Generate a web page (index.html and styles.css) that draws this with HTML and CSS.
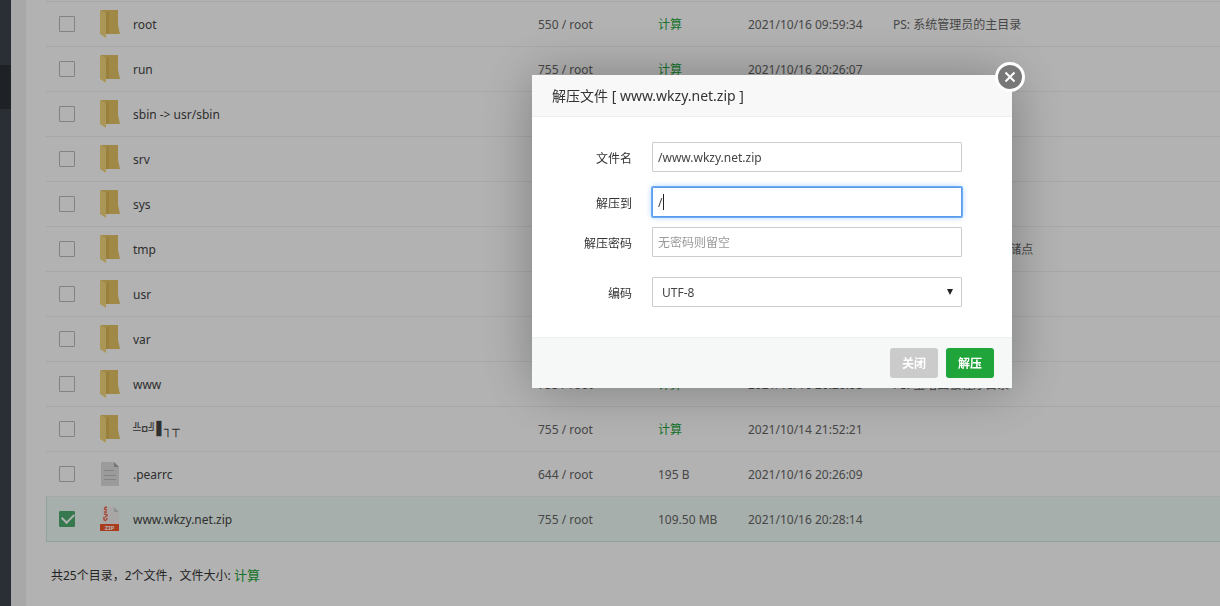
FILE: index.html
```
<!DOCTYPE html>
<html lang="zh-CN">
<head>
    <meta charset="UTF-8">
    <meta name="viewport" content="width=device-width, initial-scale=1.0">
    <title>文件管理</title>
    <link rel="stylesheet" href="styles.css">
</head>
<body>
    <!-- shared icons -->
    <svg class="sprite" aria-hidden="true">
        <symbol id="icon-folder" viewBox="0 0 20 30">
            <path fill="#e6c566" d="M1 1h17v15l2 9H6z"/>
            <path fill="#dcb958" d="M6 4l3-2v23H6z"/>
            <path fill="#f4d97e" d="M0 1l6 3v25l-6-4z"/>
        </symbol>
        <symbol id="icon-file" viewBox="0 0 20 26">
            <path fill="#dedede" d="M1 1h13l5 5v19H1z"/>
            <path fill="#a9a9a9" d="M14 1l5 5h-5z"/>
            <path stroke="#bdbdbd" stroke-width="1" d="M4 9.500h10M4 14.500h12M4 18.500h12"/>
        </symbol>
    </svg>

    <div class="page">
        <div class="sidebar"><div class="sidebar-active"></div></div>
        <div class="content">
            <table class="files">
                <colgroup>
                    <col class="col-check">
                    <col class="col-name">
                    <col class="col-perm">
                    <col class="col-size">
                    <col class="col-date">
                    <col>
                </colgroup>
                <tbody>
                    <tr>
                        <td><input type="checkbox" aria-label="root"></td>
                        <td><div class="name"><svg class="folder"><use href="#icon-folder"/></svg><span>root</span></div></td>
                        <td>550 / root</td>
                        <td><a href="#">计算</a></td>
                        <td>2021/10/16 09:59:34</td>
                        <td>PS: 系统管理员的主目录</td>
                    </tr>
                    <tr>
                        <td><input type="checkbox" aria-label="run"></td>
                        <td><div class="name"><svg class="folder"><use href="#icon-folder"/></svg><span>run</span></div></td>
                        <td>755 / root</td>
                        <td><a href="#">计算</a></td>
                        <td>2021/10/16 20:26:07</td>
                        <td></td>
                    </tr>
                    <tr>
                        <td><input type="checkbox" aria-label="sbin"></td>
                        <td><div class="name"><svg class="folder"><use href="#icon-folder"/></svg><span>sbin -&gt; usr/sbin</span></div></td>
                        <td></td>
                        <td></td>
                        <td></td>
                        <td></td>
                    </tr>
                    <tr>
                        <td><input type="checkbox" aria-label="srv"></td>
                        <td><div class="name"><svg class="folder"><use href="#icon-folder"/></svg><span>srv</span></div></td>
                        <td></td>
                        <td></td>
                        <td></td>
                        <td></td>
                    </tr>
                    <tr>
                        <td><input type="checkbox" aria-label="sys"></td>
                        <td><div class="name"><svg class="folder"><use href="#icon-folder"/></svg><span>sys</span></div></td>
                        <td></td>
                        <td></td>
                        <td></td>
                        <td></td>
                    </tr>
                    <tr>
                        <td><input type="checkbox" aria-label="tmp"></td>
                        <td><div class="name"><svg class="folder"><use href="#icon-folder"/></svg><span>tmp</span></div></td>
                        <td></td>
                        <td></td>
                        <td></td>
                        <td>PS: 公用的临时文件存储点</td>
                    </tr>
                    <tr>
                        <td><input type="checkbox" aria-label="usr"></td>
                        <td><div class="name"><svg class="folder"><use href="#icon-folder"/></svg><span>usr</span></div></td>
                        <td></td>
                        <td></td>
                        <td></td>
                        <td></td>
                    </tr>
                    <tr>
                        <td><input type="checkbox" aria-label="var"></td>
                        <td><div class="name"><svg class="folder"><use href="#icon-folder"/></svg><span>var</span></div></td>
                        <td></td>
                        <td></td>
                        <td></td>
                        <td></td>
                    </tr>
                    <tr>
                        <td><input type="checkbox" aria-label="www"></td>
                        <td><div class="name"><svg class="folder"><use href="#icon-folder"/></svg><span>www</span></div></td>
                        <td>755 / root</td>
                        <td><a href="#">计算</a></td>
                        <td>2021/10/16 20:26:08</td>
                        <td>PS: 宝塔面板程序目录</td>
                    </tr>
                    <tr>
                        <td><input type="checkbox" aria-label="╩¤╝▋┐┬"></td>
                        <td><div class="name"><svg class="folder"><use href="#icon-folder"/></svg><span class="garbled">╩¤╝▋┐┬</span></div></td>
                        <td>755 / root</td>
                        <td><a href="#">计算</a></td>
                        <td>2021/10/14 21:52:21</td>
                        <td></td>
                    </tr>
                    <tr>
                        <td><input type="checkbox" aria-label=".pearrc"></td>
                        <td><div class="name"><svg class="file"><use href="#icon-file"/></svg><span>.pearrc</span></div></td>
                        <td>644 / root</td>
                        <td>195 B</td>
                        <td>2021/10/16 20:26:09</td>
                        <td></td>
                    </tr>
                    <tr class="selected">
                        <td><input type="checkbox" aria-label="www.wkzy.net.zip" checked></td>
                        <td>
                            <div class="name">
                                <svg class="file" viewBox="0 0 20 26">
                                    <path fill="#f1efed" d="M2 1h12l5 5v12H2z"/>
                                    <path fill="#ccd2d0" d="M14 1l5 5h-5z"/>
                                    <path fill="none" stroke="#ee6a50" stroke-width="1.500" d="M7 1c-3 0-3 3 0 3M4 6h3M4 8c4 0 4 2 1 3M4 11v2c0 2 3 2 3-1"/>
                                    <path fill="#f4562c" d="M0 18h19v7H0z"/>
                                    <text x="9.500" y="24" class="zip-text">ZIP</text>
                                </svg>
                                <span>www.wkzy.net.zip</span>
                            </div>
                        </td>
                        <td>755 / root</td>
                        <td>109.50 MB</td>
                        <td>2021/10/16 20:28:14</td>
                        <td></td>
                    </tr>
                </tbody>
            </table>
            <div class="summary">共25个目录，2个文件，文件大小: <a href="#">计算</a></div>
        </div>
    </div>

    <div class="mask"></div>

    <form class="dialog" role="dialog" aria-labelledby="dialogTitle">
        <div class="dialog-title" id="dialogTitle">解压文件 [ www.wkzy.net.zip ]</div>
        <button type="button" class="dialog-x" aria-label="关闭窗口">
            <svg viewBox="0 0 12 12"><path d="M1.500 1.500l9 9M10.500 1.500l-9 9"/></svg>
        </button>
        <div class="dialog-body">
            <div class="line">
                <label for="fileName">文件名</label>
                <input type="text" id="fileName" value="/www.wkzy.net.zip">
            </div>
            <div class="line near">
                <label for="target">解压到</label>
                <div class="field">
                    <input type="text" id="target" value="/" autofocus>
                    <i class="caret"></i>
                </div>
            </div>
            <div class="line">
                <label for="password">解压密码</label>
                <input type="text" id="password" placeholder="无密码则留空">
            </div>
            <div class="line last">
                <label for="encoding">编码</label>
                <div class="field select">
                    <select id="encoding">
                        <option>UTF-8</option>
                        <option>GBK</option>
                    </select>
                </div>
            </div>
        </div>
        <div class="dialog-footer">
            <button type="button" class="btn">关闭</button>
            <button type="submit" class="btn btn-success">解压</button>
        </div>
    </form>

    <script>
        const target = document.getElementById("target");
        target.focus();
        // the drawn caret only fits the initial value
        target.addEventListener("input", () => {
            target.nextElementSibling.remove();
            target.style.caretColor = "auto";
        }, { once: true });
    </script>
</body>
</html>
```

FILE: styles.css
```
* {
    box-sizing: border-box;
}
body {
    margin: 0;
    background-color: #f1f1f1;
    font-family: "Noto Sans", "Noto Sans CJK SC", sans-serif;
    font-size: 12px;
    color: #555;
    overflow: hidden;
}
a {
    color: #20a53a;
    text-decoration: none;
}
.sprite {
    position: absolute;
    width: 0;
    height: 0;
}
.zip-text {
    font-size: 6px;
    font-weight: bold;
    fill: #fff;
    text-anchor: middle;
}

/* page */
.page {
    display: flex;
    min-height: 100vh;
}
.sidebar {
    width: 11px;
    padding-top: 65px;
    background-color: #3c444d;
}
.sidebar-active {
    height: 44px;
    background-color: #2c3138;
}
.content {
    flex: 1;
    margin-left: 15px;
    padding: 1px 0 0 20px;
    background-color: #fff;
}

/* file list */
.files {
    width: 100%;
    table-layout: fixed;
    border-collapse: collapse;
    border-top: 1px solid #f0f0f0;
}
.col-check { width: 54px; }
.col-name { width: 438px; }
.col-perm { width: 120px; }
.col-size { width: 90px; }
.col-date { width: 145px; }
.files td {
    height: 45px;
    padding: 0;
    border-bottom: 1px solid #f0f0f0;
    color: #666;
    white-space: nowrap;
}
.files td:first-child {
    padding-left: 13px;
}
.name {
    display: flex;
    align-items: center;
    gap: 13px;
    color: #444;
}
.name svg {
    width: 20px;
}
.folder { height: 30px; }
.file { height: 26px; }
.garbled {
    font-family: "Liberation Mono", monospace;
    font-size: 13px;
}
.files .selected td {
    background-color: #effbf6;
    border-bottom-color: #cfe8de;
}
.files .selected td:first-child {
    box-shadow: inset 1px 0 #cfe8de;
}
.files input {
    display: block;
    appearance: none;
    width: 16px;
    height: 16px;
    margin: 0;
    border: 1px solid #bbb;
    border-radius: 1px;
}
.files input:checked {
    position: relative;
    border-color: #4fae70;
    background-color: #4fae70;
}
.files input:checked::after {
    content: "";
    position: absolute;
    left: 2px;
    top: 3px;
    width: 10px;
    height: 6px;
    margin-top: -1px;
    border: solid #fff;
    border-width: 0 0 2px 2px;
    transform: translateY(-1px) rotate(-45deg);
}
.summary {
    padding: 23px 0 0 5px;
    line-height: 20px;
    color: #333;
}
.summary a {
    font-size: 13px;
}

/* dialog */
.mask {
    position: fixed;
    inset: 0;
    background-color: rgba(0, 0, 0, 0.3);
}
.dialog {
    position: fixed;
    top: 75px;
    right: 208px;
    width: 480px;
    background-color: #fff;
    box-shadow: 1px 1px 50px rgba(0, 0, 0, 0.3);
    color: #333;
}
.dialog-title {
    height: 42px;
    padding-left: 20px;
    border-bottom: 1px solid #eee;
    background-color: #f8f8f8;
    font-size: 14px;
    line-height: 42px;
}
.dialog-x {
    position: absolute;
    top: -13px;
    right: -13px;
    display: flex;
    align-items: center;
    justify-content: center;
    width: 30px;
    height: 30px;
    padding: 0;
    border: 3px solid #fff;
    border-radius: 50%;
    background-color: #787878;
}
.dialog-x svg {
    width: 12px;
    height: 12px;
    fill: none;
    stroke: #fff;
    stroke-width: 2;
}
.dialog-body {
    padding: 20px 50px 20px 0;
}
.line {
    display: flex;
    align-items: center;
    padding: 5px 0 10px;
}
.line.near {
    padding-bottom: 5px;
}
.line.last {
    padding-top: 10px;
}
.line label {
    width: 100px;
    margin-right: 20px;
    padding-top: 2px;
    text-align: right;
}
.line input,
.line select {
    display: block;
    width: 310px;
    height: 30px;
    padding: 0 5px;
    border: 1px solid #ccc;
    border-radius: 1px;
    background-color: #fff;
    font: inherit;
    color: #444;
    outline: none;
}
.line input::placeholder {
    color: #999;
}
.line input:focus {
    border-color: #5a9bec;
    box-shadow: 0 0 0 1px #6cacf5, 0 0 6px #9ccbff;
}
.field {
    position: relative;
}
#target {
    caret-color: transparent;
}
.caret {
    position: absolute;
    top: 7px;
    left: 11px;
    width: 1px;
    height: 16px;
    background-color: #222;
}
.line select {
    appearance: none;
    padding: 0 9px;
}
.select::after {
    content: "";
    position: absolute;
    top: 12px;
    right: 9px;
    border: solid transparent;
    border-width: 6px 3px 0;
    border-top-color: #222;
    pointer-events: none;
}
.dialog-footer {
    display: flex;
    justify-content: flex-end;
    gap: 8px;
    padding: 10px 18px;
    border-top: 1px solid #edf1f2;
    background-color: #f6f8f8;
}
.btn {
    width: 48px;
    height: 30px;
    padding: 0;
    border: 0;
    border-radius: 3px;
    background-color: #cbcbcb;
    color: #fff;
    font: inherit;
    font-weight: bold;
}
.btn-success {
    background-color: #20a53a;
}
```
